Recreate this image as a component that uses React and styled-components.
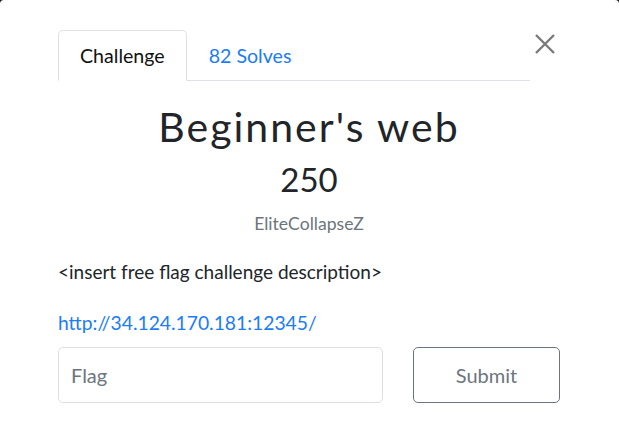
import React from "react";
import styled, { createGlobalStyle } from "styled-components";

const Global = createGlobalStyle`
  html, body { margin: 0; padding: 0; background: #1a1a1a; }
  body { font-family: Lato, "Open Sans", sans-serif; color: #212529; }
  * { box-sizing: border-box; }
`;

const Modal = styled.div`
  width: 619px;
  height: 429px;
  background: #fff;
  border-radius: 4px 4px 0 0;
  padding: 30px 59px 0 58px;
  display: flex;
  flex-direction: column;
  overflow: hidden;
`;

const Header = styled.div`
  display: flex;
  align-items: flex-start;
`;

const Tabs = styled.div`
  flex: 1;
  display: flex;
  border-bottom: 1px solid #dee2e6;
  height: 51px;
`;

const Tab = styled.div`
  height: 51px;
  padding: 0 21px;
  display: flex;
  align-items: center;
  font-size: 19.6px;
  color: ${(p) => (p.$active ? "#111" : "#1a7cf7")};
  background: ${(p) => (p.$active ? "#fff" : "transparent")};
  border: 1px solid ${(p) => (p.$active ? "#dee2e6" : "transparent")};
  border-bottom-color: ${(p) => (p.$active ? "#fff" : "transparent")};
  border-radius: 5px 5px 0 0;
`;

const Close = styled.button`
  width: 30px;
  height: 30px;
  margin-top: -1px;
  border: 0;
  background: transparent;
  padding: 0;
  display: flex;
  align-items: center;
  justify-content: center;
`;

const Title = styled.h2`
  margin: 21px 0 0;
  text-align: center;
  font-weight: 400;
  font-size: 41px;
  letter-spacing: 2px;
  line-height: 1.2;
`;

const Value = styled.h3`
  margin: 9px 0 0;
  text-align: center;
  font-weight: 400;
  font-size: 33px;
  line-height: 1.2;
`;

const Author = styled.div`
  text-align: center;
  color: #6c757d;
  font-size: 17.6px;
  margin-top: 13px;
`;

const Description = styled.p`
  margin: 26px 0 0;
  font-size: 19px;
`;

const Link = styled.a`
  display: block;
  margin-top: 28px;
  font-size: 19.3px;
  color: #1a7cf7;
  text-decoration: none;
`;

const SubmitRow = styled.div`
  display: flex;
  margin-top: 13px;
  gap: 30px;
`;

const FlagInput = styled.input`
  width: 325px;
  height: 56px;
  border: 1px solid #dcdfe3;
  border-radius: 5px;
  padding: 0 12px;
  font-family: inherit;
  font-size: 20px;
  color: #495057;
  &::placeholder { color: #6c757d; }
`;

const SubmitButton = styled.button`
  width: 147px;
  height: 56px;
  border: 1px solid #6c757d;
  border-radius: 5px;
  background: #fff;
  font-family: inherit;
  font-size: 20px;
  color: #6c757d;
`;

export default function App() {
  return (
    <>
      <Global />
      <Modal>
        <Header>
          <Tabs>
            <Tab $active>Challenge</Tab>
            <Tab>82 Solves</Tab>
          </Tabs>
          <Close aria-label="Close">
            <svg width="22" height="22" viewBox="0 0 22 22">
              <path d="M2 2 L20 20 M20 2 L2 20" stroke="#7a7a7a" strokeWidth="2.4" fill="none" />
            </svg>
          </Close>
        </Header>
        <Title>Beginner's web</Title>
        <Value>250</Value>
        <Author>EliteCollapseZ</Author>
        <Description>&lt;insert free flag challenge description&gt;</Description>
        <Link href="#">http://34.124.170.181:12345/</Link>
        <SubmitRow>
          <FlagInput placeholder="Flag" />
          <SubmitButton>Submit</SubmitButton>
        </SubmitRow>
      </Modal>
    </>
  );
}
